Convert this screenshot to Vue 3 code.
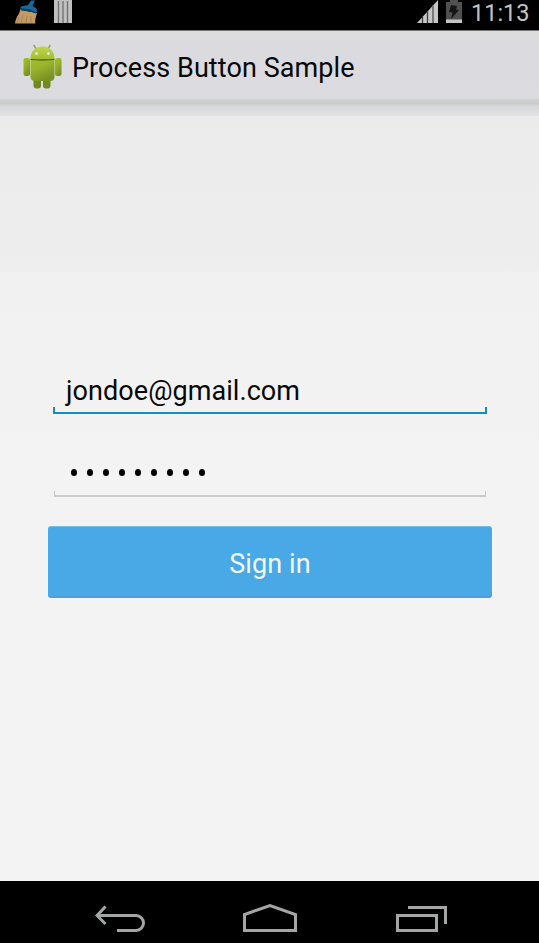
<script setup>
import { ref } from 'vue'

const email = ref('jondoe@gmail.com')
const passwordLength = 9
</script>

<template>
  <div class="screen">
    <header class="status">
      <svg class="broom" width="26" height="26" viewBox="0 0 26 26">
        <path d="M5 10C4.500 15 1 16 0 23.500h20.500c-1-3 .5-6 1.500-10.500Z" fill="#c29a65" />
        <path d="M4 17 2 23M8 15 6 23M12 16l-1 7M16 16v7" stroke="#a98150" fill="none" />
        <path d="M6 6.500 13 5l3-4.500h4L17.500 6l4 2.500L22 12l-3 1-5-2-9-1Z" fill="#17689d" />
        <path d="m6 9 8 1 7 3" stroke="#0c3c5c" stroke-width="1.300" fill="none" />
      </svg>
      <svg class="bars" width="18" height="24" viewBox="0 0 18 24">
        <path d="M0 0h18v23H0Z" fill="#c0c0c0" />
        <path d="M4.500 1v22M9 1v22M13.500 1v22" stroke="#707070" stroke-width="1.300" />
      </svg>
      <svg class="signal" width="22" height="23" viewBox="0 0 22 23">
        <path d="M0 23 21 0v23Z" fill="#c6c6c6" />
        <path d="M5.500 17v6M10.500 11.500V23" stroke="#3c3c3c" stroke-width="1.300" />
        <path d="M16 5.500V23" stroke="#777" stroke-width="2" />
      </svg>
      <svg class="battery" width="16" height="23" viewBox="0 0 16 23">
        <path d="M4 0h8v2h4v21H0V2h4Z" fill="#505050" />
        <path d="M0 19.500h16V23H0Z" fill="#c6c6c6" />
        <path d="m5 5 6 1-1 3.500 3 .5-8 9 1.500-6.500L3 12Z" fill="#151515" />
      </svg>
      <span class="clock">11:13</span>
    </header>

    <div class="actionbar">
      <svg class="android" width="40" height="46" viewBox="0 0 40 46">
        <defs>
          <linearGradient id="body" x2=".5" y2="1">
            <stop stop-color="#a3bd2d" />
            <stop offset=".4" stop-color="#9bb52b" />
            <stop offset="1" stop-color="#7a9124" />
          </linearGradient>
          <linearGradient id="head" x2="0" y2="1">
            <stop stop-color="#bcd94e" />
            <stop offset="1" stop-color="#a2bf30" />
          </linearGradient>
        </defs>
        <path d="m12 1.500 2 3.500m14-3.500-2 3.500" stroke="#91a75b" stroke-width="1.600" stroke-linecap="round" />
        <rect x="11.500" y="32" width="7.500" height="12.500" rx="3" fill="#72891f" />
        <rect x="21" y="32" width="7.500" height="12.500" rx="3" fill="#72891f" />
        <rect x="1.500" y="14" width="6.500" height="18" rx="2.200" fill="url(#body)" />
        <rect x="33" y="14" width="6.500" height="18" rx="2.200" fill="url(#body)" />
        <path d="M8.500 16h24v16.500q0 4.500-4.500 4.500H13q-4.500 0-4.500-4.500Z" fill="url(#body)" />
        <path d="M8.500 15C8.500 7 13.500 2.500 20.500 2.500S32.500 7 32.500 15Z" fill="url(#head)" />
        <path d="M8.500 15.500q12 .8 24 0" stroke="#3f5012" stroke-width="1.200" fill="none" />
        <circle cx="14.500" cy="9.500" r="1.200" fill="#fff" />
        <circle cx="26.500" cy="9.500" r="1.200" fill="#fff" />
      </svg>
      <h1 class="title">Process Button Sample</h1>
    </div>

    <main class="content">
      <div class="field focused"><span class="email">{{ email }}</span></div>
      <div class="field">
        <div class="dots"><i v-for="n in passwordLength" :key="n" class="dot" /></div>
      </div>
      <button class="signin">Sign in</button>
    </main>

    <nav class="nav">
      <svg class="back" width="51" height="28" viewBox="0 0 51 28" fill="none" stroke="#a4a6a5" stroke-width="3">
        <path d="M10.500 1.500 2 10.500l8.500 8.500M2 10.500h39a7.500 7.500 0 0 1 0 15H22" />
      </svg>
      <svg class="home" width="54" height="30" viewBox="0 0 54 30" fill="none" stroke="#a4a6a5" stroke-width="3">
        <path d="M1.500 27.500V11.500L27 2.500l25.500 9v16Z" />
      </svg>
      <svg class="recents" width="51" height="28" viewBox="0 0 51 28" fill="none" stroke="#a4a6a5" stroke-width="3">
        <path d="M1.500 10.500h39v15h-39ZM12 2.500h37.500V19" />
      </svg>
    </nav>
  </div>
</template>

<style>
body {
  margin: 0;
}
</style>

<style scoped>
.screen {
  width: 539px;
  height: 943px;
  display: flex;
  flex-direction: column;
  overflow: hidden;
  background: #f3f3f3;
  font-family: Roboto, "Liberation Sans", sans-serif;
  color: #080808;
}
svg {
  display: block;
  flex: none;
}
.status {
  height: 30px;
  flex: none;
  box-sizing: border-box;
  display: flex;
  align-items: flex-start;
  padding-left: 15px;
  background: #000;
}
.bars {
  margin-left: 13px;
}
.signal {
  margin-left: 345px;
}
.battery {
  margin-left: 7px;
}
.clock {
  margin-left: 9px;
  font-size: 23.5px;
  line-height: 28px;
  margin-top: -1px;
  white-space: nowrap;
  color: #c4c4c4;
}
.actionbar {
  height: 86px;
  flex: none;
  box-sizing: border-box;
  display: flex;
  align-items: flex-start;
  padding: 13px 0 0 22px;
  border-top: 1px solid #777;
  background: linear-gradient(#dcdcdc 0, #dbdbdf 20px, #dcdcdf 67px, #cecfce 69px, #cccecd 73px, #d9dad9 76px, #dddcdf 80px, #e2e0e3 85px);
}
.title {
  margin: 8px 0 0 10px;
  font-size: 27px;
  line-height: 32px;
  font-weight: 400;
  letter-spacing: 0.08px;
  white-space: nowrap;
}
.content {
  flex: 1;
  display: flex;
  flex-direction: column;
  padding: 254px 47px 0 48px;
  background: linear-gradient(#ebebec 0, #eeeeef 155px, #f1f1f1 157px, #f3f3f3 340px);
}
.field {
  position: relative;
  height: 44px;
  box-sizing: border-box;
  margin: 0 5px;
  padding-left: 13px;
  border-bottom: 2px solid #c9cacc;
}
.field::before,
.field::after {
  content: "";
  position: absolute;
  bottom: 0;
  width: 1px;
  height: 4px;
  background: #c5c6c8;
}
.field::before {
  left: 0;
}
.field::after {
  right: 0;
}
.field.focused {
  border-color: #128fc5;
}
.field.focused::before,
.field.focused::after {
  width: 2px;
  height: 5px;
  background: #128fc5;
}
.field + .field {
  margin: 39px 6px 0 6px;
  padding-left: 17px;
}
.email {
  display: block;
  padding-top: 5px;
  font-size: 27px;
  line-height: 32px;
  letter-spacing: 0.07px;
  white-space: nowrap;
}
.dots {
  display: flex;
  gap: 10px;
  padding-top: 16px;
}
.dot {
  width: 6px;
  height: 7px;
  border-radius: 50%;
  background: #000;
}
.signin {
  height: 72px;
  margin: 29px 0 0;
  padding: 4px 0 0;
  border: 0;
  border-top: 1px solid #70bee4;
  border-bottom: 2px solid #5a9bd3;
  border-radius: 3px;
  background: #48a9e6;
  color: #f3f8fb;
  font-family: inherit;
  font-size: 27px;
  line-height: 32px;
  letter-spacing: 0.1px;
}
.nav {
  height: 62px;
  flex: none;
  box-sizing: border-box;
  display: flex;
  align-items: flex-start;
  padding: 24px 0 0 95px;
  background: #000;
}
.home {
  margin: -2px 0 0 97px;
}
.recents {
  margin-left: 99px;
}
</style>
